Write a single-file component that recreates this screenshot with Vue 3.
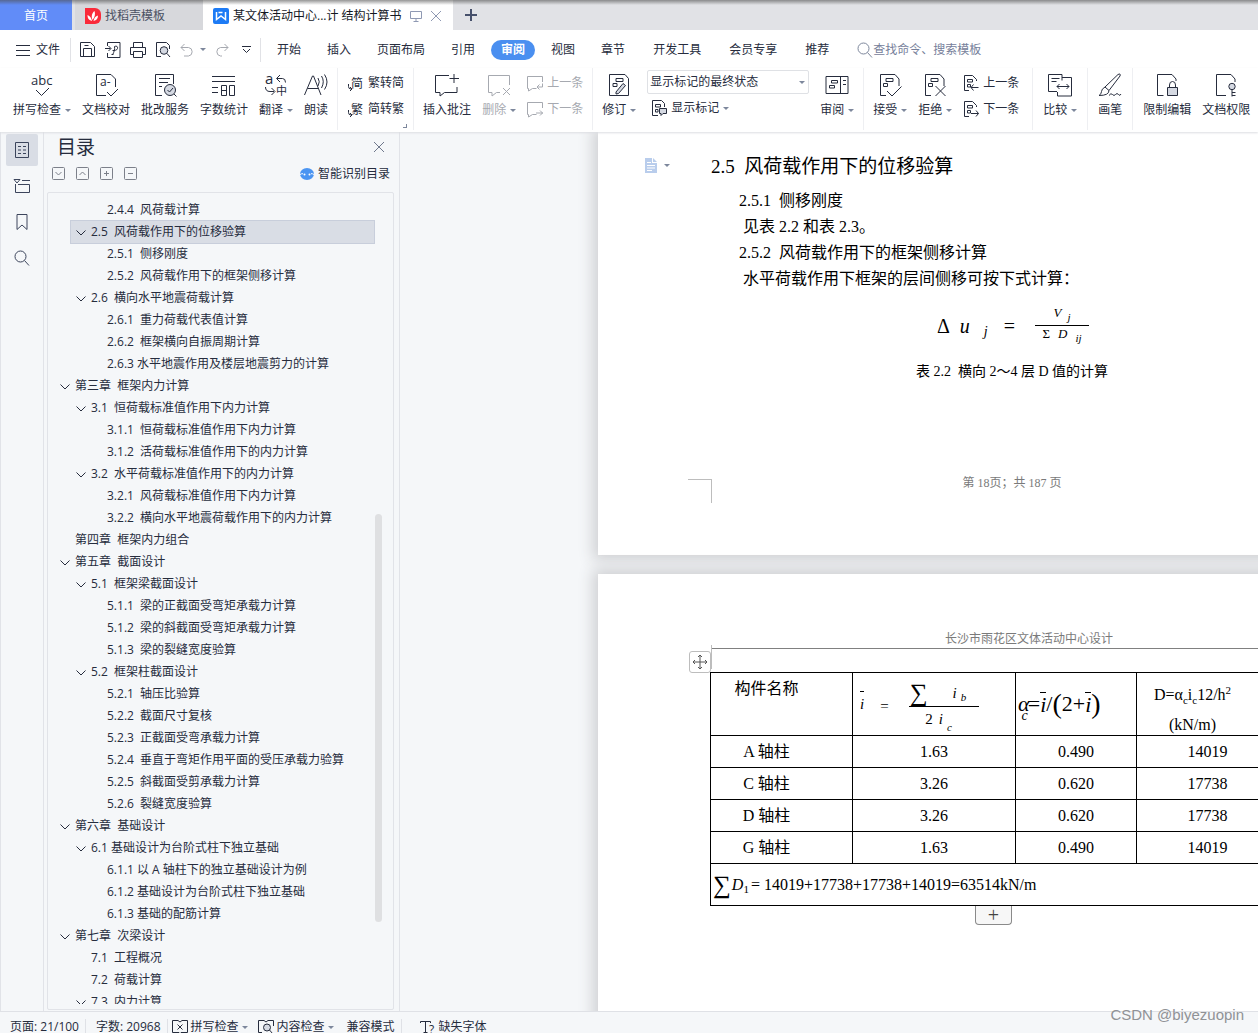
<script setup>
import { h, ref } from 'vue'

const UI = 'Open Sans, Noto Sans CJK SC, sans-serif'
const label = (x, y, size, text) =>
  `<text x="${x}" y="${y}" font-family="${UI}" font-size="${size}" fill="currentColor" stroke="none">${text}</text>`
const smallDoc =
  '<path d="M6 15.5H1.5V.5h8l4 4V6"/><path d="M4.5 4.5h5v2.5h-5zM4.5 9.5h3V12h-3z"/>'
const bubble = '<path d="M9.5 13.500H5.500l-4 2.500v-2.500H.5v-12h15V7"/>'
const trackDoc =
  '<path d="M8 22.500H2.500V1.500H17l4 4.500V13"/><path d="M8 5.500h7v3H8zM5.500 10.500h4v3h-4z"/>'

const icons = {
  menu: [14, 12, '<path d="M0 1.5h14M0 6.500h14M0 11.500h14"/>'],
  save: [16, 16, '<path d="M.5 .5h10l4 4v10H.5zM3.500 14.500v-8h8v8M4.500 3.500h4"/>'],
  exportPdf: [16, 16, '<path d="M2.500 4V.5h12.500v15H2.500V11M0 6.500h5.500M3.500 4l2.500 2.500L3.500 9"/><path d="M8 12c1-2 2-5 1.500-7.500 2-1 3.500 0 3 2s-3 2-5 2M6.500 12.500h2"/>'],
  print: [16, 16, '<path d="M3.500 5V.5h9V5M3.500 12.500H.5v-7h15v7h-3M3.500 9.500h9v6h-9z"/>'],
  preview: [16, 16, '<path d="M6 14.500H1.500V.5h10l3 3V7"/><circle cx="9" cy="8.500" r="3.800" fill="#d5d9e2"/><path d="m12 11.500 3 3.500"/>'],
  undo: [14, 14, '<path d="M4.500 1 1 4.500 4.500 8M1 4.500h7.500a4.300 4.300 0 0 1 0 8.500H4"/>'],
  redo: [14, 14, '<path d="M9.500 1 13 4.500 9.500 8M13 4.500H5.500a4.300 4.300 0 0 0 0 8.500H7"/>'],
  more: [9, 8, '<path d="M0 .5h9M1 3l3.500 3.500L8 3"/>'],
  search: [16, 16, '<circle cx="6.500" cy="6.500" r="5.500"/><path d="m10.500 10.500 4.500 5"/>'],
  screen: [12, 12, '<path d="M.5 1.500h11v7H.5zM6 8.500v3M3.500 11.500h5"/>'],
  close: [12, 12, '<path d="m1 1 10 10M11 1 1 11"/>'],
  plus: [12, 12, '<path d="M6 0v12M0 6h12" stroke-width="2"/>'],
  writer: [16, 16, '<rect width="16" height="16" rx="2" fill="#1d7bf5" stroke="none"/><path d="M3.500 4v7.500L8 8l4.500 3.500V4M5.500 4.500h4" stroke="#fff" stroke-width="1.500"/>'],
  docer: [16, 16, '<path d="M0 0h10a6 6 0 0 1 6 6v4a6 6 0 0 1-6 6H0z" fill="#fa2a3a" stroke="none"/><path d="M7 13C3.500 12 2.500 10 2.500 7 5 8 6.500 10 7 13zM7.500 12C6 8 7 5 9.500 3c1 3 .5 6-2 9zM8.500 13c.5-3 2-5 4.500-5.500 0 3-1.500 5-4.500 5.500z" fill="#fff" stroke="none"/>'],
  spell: [24, 24, label(1, 12, 13, 'abc') + '<path d="m6 17 5.500 5.500L19 15"/>'],
  proof: [24, 24, '<path d="M12 22.500H2.500V1.500H17l4.500 4.500V14M13 19l4 4 7-7"/>' + label(6, 13, 12, 'a-')],
  service: [24, 24, '<path d="M9 22.500H2.500V1.500h18V11M6 5.500h11M6 9.500h9M6 13.500h3"/><circle cx="17" cy="17" r="5.500" fill="#d5d9e2"/><path d="m14.500 17 2 2 3.500-4M21 21l2.500 2.500"/>'],
  count: [24, 24, '<path d="M0 3.500h23M0 8.500h23M0 14.500h6M0 19.500h6M9.500 12.500h5v10h-5zM17.500 12.500h5v10h-5zM9.500 17.500h5"/>'],
  translate: [24, 24, label(1, 11, 15, 'a') + label(12, 22, 11, '中') + '<path d="M16 2 12.500 5.500 16 9M13 5.500h5.500q3 0 3 4M1.500 14q0 4.500 4.500 4.500h4M7.500 15l3.500 3.500L7.500 22"/>'],
  read: [24, 24, '<path d="M.5 22 8.500 3h1L17 22M3.500 15.500H14M14 5q2.500 3.500 0 8M17.500 3q3.500 5.500 0 12M20.500 1.500q5 7.500 0 15"/>'],
  toSimple: [17, 17, label(4, 13, 12, '简') + '<path d="M1.500 9v2.500q0 2.500 2.500 2.500M3 12l2 2-2 2"/>'],
  toTrad: [17, 17, label(4, 13, 12, '繁') + '<path d="M1.500 9v2.500q0 2.500 2.500 2.500M3 12l2 2-2 2"/>'],
  addNote: [24, 24, '<path d="M14 2.500H.5v17H5v3.500l4.500-3.500h12.500V14M19 1v9M14.500 5.500H24"/>'],
  delNote: [24, 24, '<path d="M13 19.500H9.500L5 23v-3.500H1.500v-17h21V12M16 15l7 7M23 15l-7 7"/>'],
  prevNote: [16, 17, bubble + '<path d="M15.500 8.500v3.500H10M12.500 9.500 10 12l2.500 2.500"/>'],
  nextNote: [16, 17, bubble + '<path d="M9 12h7M13 9.500l2.500 2.500L13 14.500"/>'],
  revise: [24, 24, '<path d="M2.500 22.500V1.500H18l3.500 4v17z"/><path d="M9 5.500h7v3H9zM6 10.500h4v3H6z"/><path d="m9 19 7-8.500 2.500 2-7 8L9 21z" fill="#d5d9e2"/>'],
  showMark: [16, 16, '<path d="M7 15.500H1.500V.5h9l3 3V7M4.500 4.500h5V7h-5zM4.500 9.500H7V12H4.500z"/><path d="M8.500 8.500h7v5H12l-2 2v-2H8.500z" fill="#d5d9e2"/>'],
  review: [24, 24, '<path d="M1 3.500h22v17H1zM15.500 3.500v17M18 7.500h3M18 11.500h3M6.500 7.500h6v2.500h-6zM4.500 12.500h5V15h-5z"/>'],
  accept: [24, 24, trackDoc + '<path d="m9 18 5 5 9.500-9.500"/>'],
  reject: [24, 24, trackDoc + '<path d="m12.500 13 10 10M22.500 13l-10 10"/>'],
  prevChange: [16, 16, smallDoc + '<path d="M8 12.500h7.500M10.500 9.500 8 12.500l2.500 3"/>'],
  nextChange: [16, 16, smallDoc + '<path d="M8 12.500h7.500M13 9.500l2.500 3-2.500 3"/>'],
  compare: [24, 24, '<path d="M9 18.500H.5v-17H14v6M9.500 19v4h14V4.500H14M3.500 5.500h8M3.500 8.500h5M9 13.500h12M11.500 11 9 13.500l2.500 2.500M18.500 11l2.500 2.500-2.500 2.500"/>'],
  brush: [24, 24, '<path d="M7 14 20 1.500q3-1.500 2 1.500L11 17.500M7 14l4 3.500q0 5-10 5 2.500-1.500 2.500-4T7 14zM11 22.500q2-3 3.500-1t3 0 3 0 2.500-.5"/>'],
  lockDoc: [24, 24, '<path d="M8.500 22.500H2.500V1.500H17l4 4.500V8"/><path d="M12.500 14.500h10v8h-10z" fill="#d5d9e2"/><path d="M14.500 14v-2a3 3.500 0 0 1 6 0v2"/>'],
  keyDoc: [24, 24, '<path d="M12 22.500H2.500V1.500H17l4 4.500V9"/><circle cx="18" cy="13.500" r="3.200" fill="#d5d9e2"/><path d="M18 17v6.500M18 19.500h3.500M18 22.500h3.500"/>'],
  outline: [16, 16, '<path d="M1.500 .5h13v15h-13zM4 4.500h3M9 4.500h3M4 8h3M9 8h3M4 11.500h3M9 11.500h3"/>'],
  nav: [16, 16, '<path d="M8 2.500h8M1.500 6v8.500h14v-8H4M0 1.500h6L3 5z"/>'],
  bookmark: [12, 16, '<path d="M1 .5h10v15L6 11l-5 4.500z"/>'],
  chevron: [10, 6, '<path d="m.5 .5 4.500 4.500L9.500 .5"/>'],
  boxDown: [13, 13, '<rect x=".5" y=".5" width="12" height="12" rx="1"/><path d="m3.500 5 3 3 3-3"/>'],
  boxUp: [13, 13, '<rect x=".5" y=".5" width="12" height="12" rx="1"/><path d="m3.500 8 3-3 3 3"/>'],
  boxPlus: [13, 13, '<rect x=".5" y=".5" width="12" height="12" rx="1"/><path d="M4 6.500h5M6.500 4v5"/>'],
  boxMinus: [13, 13, '<rect x=".5" y=".5" width="12" height="12" rx="1"/><path d="M4 6.500h5"/>'],
  robot: [14, 12, '<ellipse cx="7" cy="6" rx="7" ry="6" fill="#4b95f2" stroke="none"/><path d="M0 6.500q1.500-1 3-.8M14 6.500q-1.500-1-3-.8" stroke="#fff"/><circle cx="4.500" cy="6.500" r="1" fill="#fff" stroke="none"/><circle cx="9.500" cy="6.500" r="1" fill="#fff" stroke="none"/>'],
  pageMark: [12, 15, '<path d="M0 0h7v5h5v10H0zM8 0l4 4H8z" fill="#b9cdec" stroke="none"/><path d="M2 4.500h4M2 7.500h8M2 10h8M2 12.500h5" stroke="#fff"/>'],
  move: [16, 16, '<path d="M8 1v14M1 8h14M6 3l2-2 2 2M6 13l2 2 2-2M3 6 1 8l2 2M13 6l2 2-2 2"/>'],
  bookCheck: [16, 14, '<path d="M7 12.500H.5V.5H6L8 2 10 .5h5.500v12H9L8 13.500zM5.500 4.500l5 5M10.500 4.500l-5 5"/>'],
  bookSearch: [16, 14, '<path d="M4 12.500H.5V.5H6L8 2 10 .5h5.500V6"/><circle cx="9" cy="7.500" r="3.500" fill="#d5d9e2"/><path d="m11.500 10 3 3.500"/>'],
  missFont: [16, 16, '<path d="M.5 4V2.500h10V4M5.500 2.500v11M3.500 13.500h4"/>' + label(9, 15, 12, '?')],
}

const Icon = (props) => {
  const [w, ht, body] = icons[props.name]
  return h('svg', {
    width: w, height: ht, viewBox: `0 0 ${w} ${ht}`, fill: 'none',
    stroke: 'currentColor', 'stroke-width': 1, 'aria-hidden': 'true', innerHTML: body,
  })
}
Icon.props = ['name']

const ribbon = [
  { icon: 'spell', text: '拼写检查', caret: true },
  { icon: 'proof', text: '文档校对' },
  { icon: 'service', text: '批改服务' },
  { icon: 'count', text: '字数统计' },
  { icon: 'translate', text: '翻译', caret: true },
  { icon: 'read', text: '朗读' },
  { sep: true },
  { pair: [['toSimple', '繁转简'], ['toTrad', '简转繁']], corner: true },
  { sep: true },
  { icon: 'addNote', text: '插入批注' },
  { icon: 'delNote', text: '删除', caret: true, off: true },
  { pair: [['prevNote', '上一条'], ['nextNote', '下一条']], off: true },
  { sep: true },
  { icon: 'revise', text: '修订', caret: true },
  { display: true },
  { icon: 'review', text: '审阅', caret: true },
  { sep: true },
  { icon: 'accept', text: '接受', caret: true },
  { icon: 'reject', text: '拒绝', caret: true },
  { pair: [['prevChange', '上一条'], ['nextChange', '下一条']], roomy: true },
  { sep: true },
  { icon: 'compare', text: '比较', caret: true },
  { sep: true },
  { icon: 'brush', text: '画笔' },
  { sep: true },
  { icon: 'lockDoc', text: '限制编辑' },
  { icon: 'keyDoc', text: '文档权限' },
]

const tabs = ['开始', '插入', '页面布局', '引用', '审阅', '视图', '章节']
const extraTabs = ['开发工具', '会员专享', '推荐']
const activeTab = ref('审阅')

const toc = [
  [3, '2.4.4  风荷载计算'],
  [2, '2.5  风荷载作用下的位移验算', 1],
  [3, '2.5.1  侧移刚度'],
  [3, '2.5.2  风荷载作用下的框架侧移计算'],
  [2, '2.6  横向水平地震荷载计算', 1],
  [3, '2.6.1  重力荷载代表值计算'],
  [3, '2.6.2  框架横向自振周期计算'],
  [3, '2.6.3 水平地震作用及楼层地震剪力的计算'],
  [1, '第三章  框架内力计算', 1],
  [2, '3.1  恒荷载标准值作用下内力计算', 1],
  [3, '3.1.1  恒荷载标准值作用下内力计算'],
  [3, '3.1.2  活荷载标准值作用下的内力计算'],
  [2, '3.2  水平荷载标准值作用下的内力计算', 1],
  [3, '3.2.1  风荷载标准值作用下内力计算'],
  [3, '3.2.2  横向水平地震荷载作用下的内力计算'],
  [1, '第四章  框架内力组合'],
  [1, '第五章  截面设计', 1],
  [2, '5.1  框架梁截面设计', 1],
  [3, '5.1.1  梁的正截面受弯矩承载力计算'],
  [3, '5.1.2  梁的斜截面受弯矩承载力计算'],
  [3, '5.1.3  梁的裂缝宽度验算'],
  [2, '5.2  框架柱截面设计', 1],
  [3, '5.2.1  轴压比验算'],
  [3, '5.2.2  截面尺寸复核'],
  [3, '5.2.3  正截面受弯承载力计算'],
  [3, '5.2.4  垂直于弯矩作用平面的受压承载力验算'],
  [3, '5.2.5  斜截面受剪承载力计算'],
  [3, '5.2.6  裂缝宽度验算'],
  [1, '第六章  基础设计', 1],
  [2, '6.1 基础设计为台阶式柱下独立基础', 1],
  [3, '6.1.1 以 A 轴柱下的独立基础设计为例'],
  [3, '6.1.2 基础设计为台阶式柱下独立基础'],
  [3, '6.1.3 基础的配筋计算'],
  [1, '第七章  次梁设计', 1],
  [2, '7.1  工程概况'],
  [2, '7.2  荷载计算'],
  [2, '7.3  内力计算', 1],
]
const selected = ref(1)

const doc = {
  title: '2.5  风荷载作用下的位移验算',
  stiffness: '2.5.1  侧移刚度',
  drift: '2.5.2  风荷载作用下的框架侧移计算',
  caption: '表 2.2  横向 2～4 层 D 值的计算',
}

const rows = [
  ['A 轴柱', '1.63', '0.490', '14019'],
  ['C 轴柱', '3.26', '0.620', '17738'],
  ['D 轴柱', '3.26', '0.620', '17738'],
  ['G 轴柱', '1.63', '0.490', '14019'],
]
</script>

<template>
  <div class="app">
    <header class="tabstrip">
      <button class="home">首页</button>
      <button class="filetab"><Icon name="docer" /><span>找稻壳模板</span></button>
      <div class="filetab current">
        <Icon name="writer" /><span>某文体活动中心...计 结构计算书</span>
        <button class="bare pale" aria-label="窗口"><Icon name="screen" /></button>
        <button class="bare pale" aria-label="关闭"><Icon name="close" /></button>
      </div>
      <button class="bare newtab" aria-label="新建"><Icon name="plus" /></button>
    </header>

    <nav class="menubar">
      <button class="bare filemenu"><Icon name="menu" />文件</button>
      <div class="quick">
        <button class="bare" aria-label="保存"><Icon name="save" /></button>
        <button class="bare" aria-label="输出"><Icon name="exportPdf" /></button>
        <button class="bare" aria-label="打印"><Icon name="print" /></button>
        <button class="bare" aria-label="预览"><Icon name="preview" /></button>
        <button class="bare off" aria-label="撤销"><Icon name="undo" /><i class="caret"></i></button>
        <button class="bare off" aria-label="恢复"><Icon name="redo" /></button>
        <button class="bare more" aria-label="更多"><Icon name="more" /></button>
      </div>
      <div class="tabs">
        <button v-for="t in tabs" :key="t" :class="['tab', { active: t === activeTab }]" @click="activeTab = t">{{ t }}</button>
      </div>
      <div class="tabs extra">
        <button v-for="t in extraTabs" :key="t" :class="['tab', { active: t === activeTab }]" @click="activeTab = t">{{ t }}</button>
      </div>
      <label class="search"><Icon name="search" /><input type="text" aria-label="搜索" placeholder="查找命令、搜索模板" /></label>
    </nav>

    <div class="ribbon">
      <template v-for="(item, n) in ribbon" :key="n">
        <span v-if="item.sep" class="sep"></span>
        <div v-else-if="item.pair" :class="['pair', { off: item.off, roomy: item.roomy }]">
          <button v-for="p in item.pair" :key="p[0]" class="bare small"><Icon :name="p[0]" />{{ p[1] }}</button>
          <i v-if="item.corner" class="corner"></i>
        </div>
        <div v-else-if="item.display" class="pair display">
          <div class="selectbox">
            <select aria-label="显示状态"><option>显示标记的最终状态</option></select>
            <i class="caret"></i>
          </div>
          <button class="bare small mark"><Icon name="showMark" />显示标记<i class="caret"></i></button>
        </div>
        <button v-else :class="['bare', 'big', { off: item.off }]">
          <Icon :name="item.icon" /><span>{{ item.text }}<i v-if="item.caret" class="caret"></i></span>
        </button>
      </template>
    </div>

    <main class="work">
      <aside class="rail">
        <button class="bare on" aria-label="目录"><Icon name="outline" /></button>
        <button class="bare" aria-label="导航"><Icon name="nav" /></button>
        <button class="bare" aria-label="书签"><Icon name="bookmark" /></button>
        <button class="bare" aria-label="查找"><Icon name="search" /></button>
      </aside>

      <section class="panel">
        <div class="panelhead"><h2>目录</h2><button class="bare" aria-label="关闭目录"><Icon name="close" /></button></div>
        <div class="paneltools">
          <button class="bare" aria-label="展开"><Icon name="boxDown" /></button>
          <button class="bare" aria-label="收起"><Icon name="boxUp" /></button>
          <button class="bare" aria-label="增加"><Icon name="boxPlus" /></button>
          <button class="bare" aria-label="减少"><Icon name="boxMinus" /></button>
          <button class="bare smart"><Icon name="robot" />智能识别目录</button>
        </div>
        <div class="tree">
          <ul>
            <li v-for="(item, n) in toc" :key="n" :class="['lv' + item[0], { sel: n === selected }]" @click="selected = n">
              <span class="twist"><Icon v-if="item[2]" name="chevron" /></span>{{ item[1] }}
            </li>
          </ul>
          <span class="thumb"></span>
        </div>
      </section>

      <section class="canvas">
        <article class="page first">
          <button class="bare anchor" aria-label="段落"><Icon name="pageMark" /><i class="caret"></i></button>
          <h1>{{ doc.title }}</h1>
          <h3>{{ doc.stiffness }}</h3>
          <p>见表 2.2 和表 2.3。</p>
          <h3>{{ doc.drift }}</h3>
          <p>水平荷载作用下框架的层间侧移可按下式计算：</p>
          <div class="formula">
            <span>Δ</span><em>u</em><em class="low">j</em><span class="eq">=</span>
            <span class="frac">
              <span class="num"><em>V</em><em class="low">j</em></span>
              <span class="den"><span>Σ</span><em>D</em><em class="low">ij</em></span>
            </span>
          </div>
          <div class="caption">{{ doc.caption }}</div>
          <footer>第 18页；共 187 页</footer>
          <i class="crop bottom"></i>
        </article>

        <article class="page second">
          <div class="runhead">长沙市雨花区文体活动中心设计</div>
          <i class="crop top"></i>
          <button class="handle" aria-label="移动表格"><Icon name="move" /></button>
          <table>
            <colgroup><col class="c1" /><col class="c2" /><col class="c3" /><col class="c4" /></colgroup>
            <thead>
              <tr>
                <th class="name">构件名称</th>
                <th>
                  <div class="ratio">
                    <em class="bar">i</em><span class="eq">=</span>
                    <span class="frac">
                      <span class="num"><span class="sum">∑</span><em>i</em><em class="low">b</em></span>
                      <span class="den"><span>2</span><em>i</em><em class="low">c</em></span>
                    </span>
                  </div>
                </th>
                <th>
                  <div class="alpha">
                    <em>α</em><em class="under">c</em><span>=</span><em class="bar">i</em><span>/</span><span class="paren">(</span><span>2+</span><em class="bar">i</em><span class="paren">)</span>
                  </div>
                </th>
                <th>
                  <div class="unit">
                    <span>D=α<sub>c</sub>i<sub>c</sub>12/h<sup>2</sup></span>
                    <span>(kN/m)</span>
                  </div>
                </th>
              </tr>
            </thead>
            <tbody>
              <tr v-for="r in rows" :key="r[0]">
                <td v-for="(c, n) in r" :key="n">{{ c }}</td>
              </tr>
              <tr class="total">
                <td colspan="4"><div class="sumline"><span class="sum">∑</span><em>D</em><span class="low">1</span><span>= 14019+17738+17738+14019=63514kN/m</span></div></td>
              </tr>
            </tbody>
          </table>
          <button class="addrow" aria-label="添加行">+</button>
        </article>
      </section>
    </main>

    <footer class="status">
      <span class="cell">页面: 21/100</span>
      <span class="cell words">字数: 20968</span>
      <button class="bare"><Icon name="bookCheck" />拼写检查<i class="caret"></i></button>
      <button class="bare"><Icon name="bookSearch" />内容检查<i class="caret"></i></button>
      <span class="cell mode">兼容模式</span>
      <button class="bare missing"><Icon name="missFont" />缺失字体</button>
    </footer>
    <div class="watermark">CSDN @biyezuopin</div>
  </div>
</template>

<style>
body {
  margin: 0;
}
</style>

<style scoped>
.app {
  position: relative;
  display: flex;
  flex-direction: column;
  height: 100vh;
  overflow: hidden;
  background: #f5f7f9;
  color: #262c3d;
  font: 12px/16px "Open Sans", "Noto Sans CJK SC", sans-serif;
}
button, input, select {
  font: inherit;
  color: inherit;
}
svg {
  flex: none;
  display: block;
  overflow: visible;
}
.bare {
  display: flex;
  align-items: center;
  border: 0;
  padding: 0;
  background: none;
  white-space: nowrap;
}
.caret {
  flex: none;
  display: inline-block;
  width: 0;
  height: 0;
  border: 3px solid transparent;
  border-top-color: #7d879c;
  border-bottom-width: 0;
}
.off {
  color: #a6a9b0;
}

.tabstrip {
  position: relative;
  flex: none;
  display: flex;
  height: 30px;
  background: #e1e2e6;
}
.tabstrip::after {
  content: "";
  position: absolute;
  inset: 0 0 auto 0;
  height: 5px;
  background: linear-gradient(rgba(80, 80, 80, 0.6), rgba(80, 80, 80, 0));
  pointer-events: none;
}
.home {
  width: 72px;
  margin-right: 3px;
  padding: 2px 0 0;
  border: 0;
  background: #618cf8;
  color: #fff;
}
.filetab {
  display: flex;
  align-items: center;
  gap: 4px;
  box-sizing: border-box;
  width: 128px;
  padding: 2px 0 0 10px;
  border: 0;
  background: #d7d8dc;
  color: #4b5163;
  white-space: nowrap;
}
.filetab.current {
  width: 250px;
  background: #fff;
  color: #14181f;
}
.pale {
  margin-left: 4px;
  color: #8f99b3;
}
.newtab {
  margin-left: 12px;
  color: #46506b;
}

.menubar {
  flex: none;
  display: flex;
  align-items: center;
  box-sizing: border-box;
  height: 38px;
  padding-top: 1px;
  background: #fff;
}
.filemenu {
  gap: 6px;
  height: 24px;
  padding: 0 10px 0 16px;
  border-right: 1px solid #e1e2e6;
}
.quick {
  display: flex;
  align-items: center;
  gap: 9px;
  height: 24px;
  padding: 0 9px;
  border-right: 1px solid #e1e2e6;
}
.quick .off {
  gap: 6px;
}
.more {
  margin-left: 4px;
}
.tabs {
  display: flex;
  gap: 6px;
  margin-left: 6px;
}
.extra {
  gap: 8px;
  margin-left: 8px;
}
.tab {
  height: 20px;
  padding: 1px 10px 0;
  border: 0;
  border-radius: 10px;
  background: none;
  white-space: nowrap;
}
.tab.active {
  background: #4a8ff0;
  color: #fff;
  font-weight: 700;
}
.search {
  flex: 1;
  display: flex;
  align-items: center;
  margin-left: 18px;
  color: #7d879c;
}
.search input {
  flex: 1;
  min-width: 0;
  padding: 0;
  border: 0;
  outline: 0;
  background: none;
}
.search input::placeholder {
  color: #76809a;
  opacity: 1;
}

.ribbon {
  position: relative;
  z-index: 1;
  flex: none;
  display: flex;
  gap: 11px;
  height: 64px;
  padding-left: 13px;
  background: #fff;
  box-shadow: 0 1px 2px #dcdee2;
}
.sep {
  flex: none;
  width: 1px;
  height: 62px;
  margin: 0 -2px;
  background: #eeeff2;
}
.roomy ~ .sep {
  margin: 0 -1px;
}
.big {
  flex: none;
  flex-direction: column;
  gap: 5px;
  padding-top: 5px;
}
.big span {
  display: flex;
  align-items: center;
}
.big .caret {
  margin-left: 4px;
}
.pair {
  position: relative;
  flex: none;
  display: flex;
  flex-direction: column;
  gap: 2px;
  padding-top: 3px;
}
.roomy {
  padding-right: 3px;
}
.small {
  gap: 4px;
  height: 24px;
}
.corner {
  position: absolute;
  right: -3px;
  bottom: 4px;
  width: 3px;
  height: 3px;
  border: solid #7d879c;
  border-width: 0 1px 1px 0;
}
.display {
  width: 162px;
  padding-top: 2px;
}
.selectbox {
  position: relative;
}
.selectbox select {
  box-sizing: border-box;
  width: 100%;
  height: 24px;
  padding: 0 2px;
  border: 1px solid #dfe1e5;
  border-radius: 2px;
  background: #fff;
  appearance: none;
}
.selectbox .caret {
  position: absolute;
  right: 4px;
  top: 11px;
}
.mark {
  padding-left: 4px;
}

.work {
  flex: 1;
  display: flex;
  min-height: 0;
}
.rail {
  flex: none;
  display: flex;
  flex-direction: column;
  gap: 4px;
  width: 37px;
  padding: 2px 0 0 5px;
  border: solid #e1e3e8;
  border-width: 0 1px;
  color: #3c455c;
}
.rail .bare {
  justify-content: center;
  width: 32px;
  height: 32px;
  border-radius: 2px;
}
.rail .on {
  background: #d9dde5;
}
.panel {
  flex: none;
  box-sizing: border-box;
  display: flex;
  flex-direction: column;
  width: 356px;
  padding: 0 5px 1px 3px;
  border-right: 1px solid #e1e3e8;
}
.panelhead {
  display: flex;
  align-items: center;
  justify-content: space-between;
  height: 30px;
  padding: 0 9px 0 10px;
}
.panelhead h2 {
  margin: 0;
  font-size: 19px;
  font-weight: 400;
  line-height: 28px;
}
.panelhead .bare {
  color: #6f788c;
}
.paneltools {
  display: flex;
  align-items: center;
  gap: 11px;
  height: 23px;
  padding: 0 4px 7px 5px;
  color: #7c808a;
}
.smart {
  gap: 4px;
  margin-left: auto;
  padding-top: 1px;
  color: #262c3d;
}
.tree {
  position: relative;
  flex: 1;
  min-height: 0;
  overflow: hidden;
  padding-bottom: 5px;
  border: 1px solid #e1e3e8;
  border-radius: 2px;
}
.tree ul {
  height: 100%;
  box-sizing: border-box;
  overflow: hidden;
  margin: 0;
  padding: 6px 19px 0 23px;
  list-style: none;
}
.tree li {
  display: flex;
  align-items: center;
  height: 22px;
  white-space: pre;
}
.tree .sel {
  background: #d9dde5;
  box-shadow: 0 0 0 1px #c8cedb;
}
.twist {
  flex: none;
  width: 15px;
  padding-top: 2px;
}
.lv1 {
  margin-left: -11px;
}
.lv2 {
  padding-left: 5px;
}
.lv3 {
  padding-left: 21px;
}
.thumb {
  position: absolute;
  right: 11px;
  top: 321px;
  width: 7px;
  height: 408px;
  border-radius: 4px;
  background: #dfe0e2;
}

.canvas {
  flex: 1;
  min-width: 0;
  overflow: hidden;
  padding-left: 198px;
  color: #000;
  font: 16px/26px "Liberation Serif", "Noto Sans CJK SC", serif;
}
.page {
  position: relative;
  box-sizing: border-box;
  width: 828px;
  padding: 0 113px;
  background: #fff;
  box-shadow: 0 0 14px 5px #cfd0d3;
}
.page h1, .page h3, .page p {
  margin: 0;
  font-size: 16px;
  font-weight: 400;
  white-space: pre;
}
.page h1 {
  margin-bottom: 8px;
  font-size: 19px;
}
.page h3 {
  padding-left: 28px;
}
.page p {
  padding-left: 32px;
}
.first {
  height: 423px;
  padding-top: 22px;
}
.anchor {
  position: absolute;
  left: 47px;
  top: 26px;
  gap: 7px;
}
.formula {
  display: flex;
  align-items: center;
  justify-content: center;
  height: 67px;
  padding-left: 2px;
  font-size: 20px;
}
.formula > em {
  margin-left: 10px;
}
.formula > .low {
  padding-top: 12px;
  margin-left: 14px;
  font-size: 14px;
}
.formula > .eq {
  margin: 0 20px 0 16px;
}
.frac {
  display: flex;
  flex-direction: column;
}
.num, .den {
  display: flex;
  justify-content: center;
}
.formula .num, .formula .den {
  gap: 6px;
  width: 54px;
  font-size: 13px;
  line-height: 16px;
}
.formula .frac .low {
  padding-top: 4px;
  font-size: 11px;
}
.formula .den {
  gap: 8px;
}
.num {
  border-bottom: 1px solid #000;
}
.caption {
  font-size: 14px;
  text-align: center;
  white-space: pre;
}
.page footer {
  margin-top: 87px;
  color: #7a7a7a;
  font-size: 12px;
  line-height: 22px;
  text-align: center;
}
.crop {
  position: absolute;
  left: 90px;
  box-sizing: border-box;
  width: 24px;
  height: 24px;
  border: solid #bdbdbd;
  border-width: 0 1px 0 0;
}
.crop.bottom {
  top: 347px;
  border-top-width: 1px;
}
.crop.top {
  top: 71px;
}
.second {
  height: 860px;
  margin-top: 19px;
  padding: 54px 0 0 113px;
}
.runhead {
  height: 20px;
  margin-bottom: 23px;
  border-bottom: 1px solid #808080;
  color: #7a7a7a;
  font-size: 12px;
  line-height: 22px;
  text-indent: 234px;
}
.handle {
  position: absolute;
  left: 91px;
  top: 77px;
  box-sizing: border-box;
  display: flex;
  align-items: center;
  justify-content: center;
  width: 22px;
  height: 22px;
  padding: 0;
  border: 1px solid #bdbdbd;
  border-radius: 3px;
  background: #fff;
  color: #555;
}
table {
  table-layout: fixed;
  width: 568px;
  border-collapse: collapse;
  margin-left: -1px;
}
.c1 {
  width: 142px;
}
.c2 {
  width: 163px;
}
.c3 {
  width: 121px;
}
.c4 {
  width: 142px;
}
th, td {
  box-sizing: border-box;
  height: 32px;
  padding: 0;
  border: 1px solid #000;
  font-weight: 400;
  line-height: 24px;
  text-align: center;
}
th {
  height: 63px;
}
.name {
  padding: 4px 30px 0 0;
  vertical-align: top;
}
td:first-child {
  padding-right: 30px;
}
.unit {
  display: flex;
  flex-direction: column;
  gap: 10px;
  padding: 11px 30px 0 0;
  line-height: 20px;
}
sub, sup {
  font-size: 11px;
  line-height: 0;
}
.total td {
  height: 42px;
}
.ratio, .alpha, .sumline {
  display: flex;
  align-items: center;
}
.ratio {
  padding: 4px 0 0 7px;
  font-size: 15px;
}
.bar {
  border-top: 1px solid #000;
  line-height: 24px;
}
.ratio > .bar {
  margin-bottom: 6px;
}
.ratio > .eq {
  margin: 0 20px 0 16px;
}
.ratio .num {
  align-items: center;
  justify-content: flex-start;
  width: 70px;
  height: 26px;
}
.ratio .sum {
  margin: 0 25px 0 1px;
  font-size: 25px;
}
.ratio .low {
  padding-top: 8px;
  margin-left: 4px;
  font-size: 11px;
}
.ratio .den {
  gap: 6px;
  width: 60px;
  height: 26px;
}
.ratio .den .low {
  margin-left: -2px;
}
.alpha {
  padding-left: 2px;
  font-size: 22px;
}
.alpha .under {
  margin: 24px 0 0 -8px;
  font-size: 14px;
  line-height: 14px;
}
.alpha .paren {
  font-size: 28px;
}
.sumline {
  padding-left: 2px;
}
.sumline .sum {
  margin-right: 1px;
  font-size: 25px;
}
.sumline .low {
  margin-right: 2px;
  padding-top: 8px;
  font-size: 11px;
}
.addrow {
  display: block;
  box-sizing: border-box;
  width: 37px;
  height: 19px;
  margin-left: 264px;
  padding: 0;
  border: 1px solid #8a8a8a;
  border-top: 0;
  border-radius: 0 0 4px 4px;
  background: #f7f7f7;
  color: #444;
  font-size: 20px;
  line-height: 18px;
}

.status {
  position: relative;
  z-index: 1;
  flex: none;
  box-sizing: border-box;
  display: flex;
  align-items: flex-start;
  height: 22px;
  padding: 7px 0 0 10px;
  border-top: 1px solid #dfe1e6;
  background: #f5f7f9;
}
.status .cell {
  padding-right: 6px;
  border-right: 1px solid #dfe1e6;
  margin-right: 10px;
}
.status .words {
  margin-right: 4px;
}
.status .bare {
  gap: 3px;
  height: 16px;
  margin-right: 10px;
}
.status .mode {
  margin: 0 18px 0 3px;
}
.status .missing {
  margin-right: 0;
}
.watermark {
  position: absolute;
  z-index: 2;
  right: 14px;
  bottom: 8px;
  color: #909296;
  font: 15px/20px "Liberation Sans", sans-serif;
}
</style>
